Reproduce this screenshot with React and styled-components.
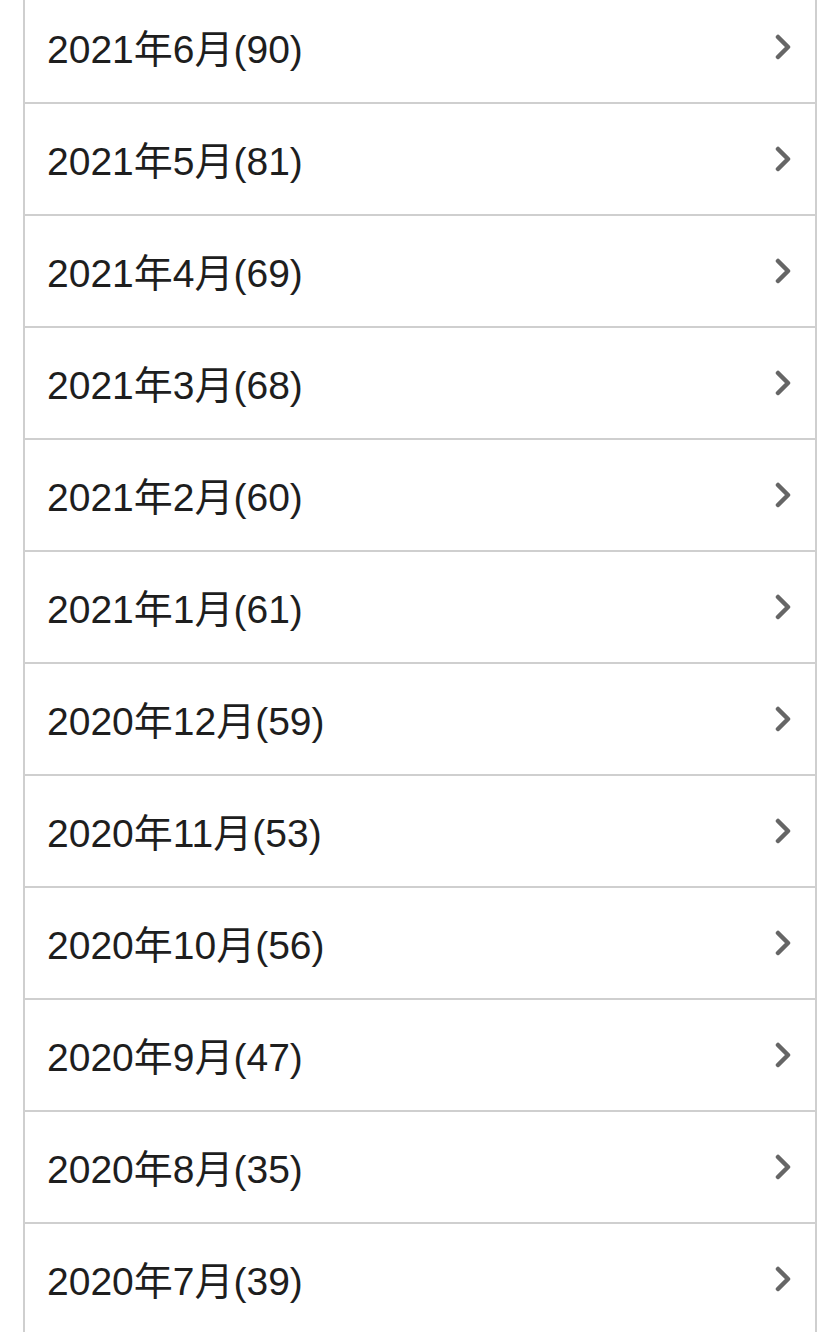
import React from "react";
import styled, { createGlobalStyle } from "styled-components";

const GlobalStyle = createGlobalStyle`
  html, body {
    margin: 0;
    padding: 0;
    background: #ffffff;
    overflow: hidden;
  }
`;

const archives = [
  { label: "2021年6月", count: 90 },
  { label: "2021年5月", count: 81 },
  { label: "2021年4月", count: 69 },
  { label: "2021年3月", count: 68 },
  { label: "2021年2月", count: 60 },
  { label: "2021年1月", count: 61 },
  { label: "2020年12月", count: 59 },
  { label: "2020年11月", count: 53 },
  { label: "2020年10月", count: 56 },
  { label: "2020年9月", count: 47 },
  { label: "2020年8月", count: 35 },
  { label: "2020年7月", count: 39 },
];

export default function App() {
  return (
    <>
      <GlobalStyle />
      <Page>
        <List>
          {archives.map((item, index) => (
            <Row key={index} href="#">
              <Label>
                {item.label}({item.count})
              </Label>
              <Chevron viewBox="0 0 16 26" aria-hidden="true">
                <polyline points="3,3 13,13 3,23" />
              </Chevron>
            </Row>
          ))}
        </List>
      </Page>
    </>
  );
}

const Page = styled.div`
  padding: 0 23px;
  height: 1332px;
  overflow: hidden;
`;

const List = styled.ul`
  list-style: none;
  margin: -8px 0 0;
  padding: 0;
  border-left: 2px solid #cfcfcf;
  border-right: 2px solid #cfcfcf;
`;

const Row = styled.a`
  display: flex;
  align-items: center;
  justify-content: space-between;
  height: 110px;
  padding: 0 24px 0 22px;
  border-bottom: 2px solid #cfcfcf;
  text-decoration: none;
  color: #1e1e1e;
`;

const Label = styled.span`
  font-family: "Liberation Sans", "Noto Sans CJK JP", sans-serif;
  font-size: 39px;
  line-height: 1;
  padding-top: 4px;
`;

const Chevron = styled.svg`
  width: 16px;
  height: 26px;
  fill: none;
  stroke: #666666;
  stroke-width: 4.5;
  stroke-linecap: round;
  stroke-linejoin: round;
`;
